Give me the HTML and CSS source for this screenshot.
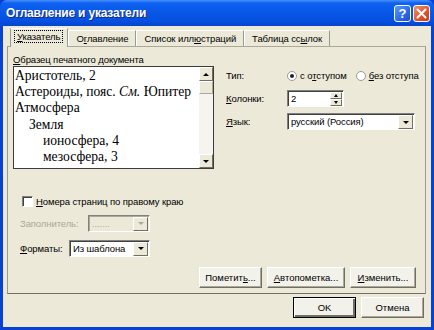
FILE: index.html
```html
<!DOCTYPE html>
<html>
<head>
    <link rel="stylesheet" href="styles.css">
</head>
<body>
    <div class="window">
        <div class="titlebar">
            <span class="title">Оглавление и указатели</span>
            <span class="cbtn help">?</span>
            <span class="cbtn close">
                <svg width="11" height="11" viewBox="0 0 11 11"><path d="M1.5 1.5 L9.5 9.5 M9.5 1.5 L1.5 9.5" stroke="#fff" stroke-width="2" stroke-linecap="round"/></svg>
            </span>
        </div>
        <div class="client">
            <div class="tabs">
                <span class="tab active"><span class="focus"><u>У</u>казатель</span></span>
                <span class="tab">О<u>г</u>лавление</span>
                <span class="tab">Список илл<u>ю</u>страций</span>
                <span class="tab">Таблица сс<u>ы</u>лок</span>
            </div>
            <div class="panel">
                <div class="top">
                    <div class="preview-col">
                        <div class="label"><u>О</u>бразец печатного документа</div>
                        <div class="preview">
                            <div class="preview-text">
                                <div>Аристотель, 2</div>
                                <div>Астероиды, пояс. <i>См.</i> Юпитер</div>
                                <div>Атмосфера</div>
                                <div class="lvl2">Земля</div>
                                <div class="lvl3">ионосфера, 4</div>
                                <div class="lvl3">мезосфера, 3</div>
                            </div>
                            <div class="vscroll">
                                <span class="sbtn"><span class="arrow up"></span></span>
                                <span class="thumb"></span>
                                <span class="track"></span>
                                <span class="sbtn"><span class="arrow down"></span></span>
                            </div>
                        </div>
                    </div>
                    <div class="options">
                        <div class="opt-row">
                            <span class="opt-label">Тип:</span>
                            <span class="radio checked"></span>
                            <span class="radio-text">с о<u>т</u>ступом</span>
                            <span class="radio"></span>
                            <span class="radio-text"><u>б</u>ез отступа</span>
                        </div>
                        <div class="opt-row">
                            <span class="opt-label"><u>К</u>олонки:</span>
                            <span class="spin">
                                <span class="spin-value">2</span>
                                <span class="spin-btns">
                                    <span class="spin-btn"><span class="arrow up small"></span></span>
                                    <span class="spin-btn"><span class="arrow down small"></span></span>
                                </span>
                            </span>
                        </div>
                        <div class="opt-row">
                            <span class="opt-label"><u>Я</u>зык:</span>
                            <span class="combo lang">
                                <span class="combo-value">русский (Россия)</span>
                                <span class="combo-btn"><span class="arrow down"></span></span>
                            </span>
                        </div>
                    </div>
                </div>
                <div class="check-row">
                    <span class="checkbox"></span>
                    <span><u>Н</u>омера страниц по правому краю</span>
                </div>
                <div class="field-row disabled">
                    <span class="field-label">Заполнитель:</span>
                    <span class="combo filler">
                        <span class="combo-value">.......</span>
                        <span class="combo-btn"><span class="arrow down"></span></span>
                    </span>
                </div>
                <div class="field-row">
                    <span class="field-label short"><u>Ф</u>орматы:</span>
                    <span class="combo formats">
                        <span class="combo-value">Из шаблона</span>
                        <span class="combo-btn"><span class="arrow down"></span></span>
                    </span>
                </div>
                <div class="panel-buttons">
                    <button class="btn mark">Пометит<u>ь</u>...</button>
                    <button class="btn auto"><u>А</u>втопометка...</button>
                    <button class="btn change"><u>И</u>зменить...</button>
                </div>
            </div>
            <div class="dialog-buttons">
                <button class="btn default">OK</button>
                <button class="btn">Отмена</button>
            </div>
        </div>
    </div>
</body>
</html>
```

FILE: styles.css
```css
* {
    box-sizing: border-box;
}

body {
    margin: 0;
    background-color: #0a3fd0;
    font-family: "Liberation Sans", Arial, sans-serif;
    font-size: 9.5px;
    letter-spacing: -0.1px;
    color: #000000;
}

.window {
    width: 434px;
    height: 330px;
    display: flex;
    flex-direction: column;
    background-color: #0842d4;
    border-radius: 7px 7px 0 0;
}

.titlebar {
    height: 26px;
    display: flex;
    align-items: center;
    gap: 2px;
    padding: 0 4px 0 6px;
    border-radius: 7px 7px 0 0;
    background: linear-gradient(#4a90ff 0, #0d62f2 3px, #0a58e8 45%, #0650e0 80%, #0445cc 100%);
}

.title {
    flex: 1;
    color: white;
    font-size: 12px;
    font-weight: bold;
    letter-spacing: -0.2px;
    text-shadow: 1px 1px #102a80;
}

.cbtn {
    width: 17px;
    height: 17px;
    border: 1px solid #ffffff;
    border-radius: 3px;
    display: flex;
    align-items: center;
    justify-content: center;
    color: white;
    font-weight: bold;
    font-size: 13px;
}

.help {
    background: linear-gradient(135deg, #5a9cff, #2a68e8 60%, #1a50d0);
}

.close {
    background: linear-gradient(135deg, #f0906a, #e0542c 60%, #c83a18);
}

.client {
    flex: 1;
    margin: 0 3px 3px 3px;
    padding: 2px 5px 0 4px;
    background-color: #ece9d8;
    display: flex;
    flex-direction: column;
}

/* tabs */
.tabs {
    height: 18px;
    display: flex;
    align-items: flex-end;
    padding-left: 3px;
}

.tab {
    height: 16px;
    padding: 2px 7px 0 7px;
    border-top: 1px solid #ffffff;
    border-right: 1px solid #919b9c;
    border-left: 1px solid #ffffff;
    background-color: #ece9d8;
    white-space: nowrap;
}

.tab.active {
    height: 19px;
    margin-bottom: -1px;
    padding: 2px 5px 0 4px;
    position: relative;
    border-left: 1px solid #919b9c;
}

.focus {
    display: inline-block;
    padding: 0 2px;
    outline: 1px dotted #000000;
}

.panel {
    height: 248px;
    border: 1px solid #919b9c;
    border-top-color: #aca899;
    border-bottom-color: #716f64;
    padding: 7px 9px 0 5px;
    display: flex;
    flex-direction: column;
}

.top {
    display: flex;
}

.label {
    height: 12px;
    line-height: 11px;
}

.preview {
    width: 201px;
    height: 103px;
    display: flex;
    border: 1px solid #3c3c3c;
    background-color: white;
}

.preview-text {
    flex: 1;
    padding: 1px 0 0 1px;
    font-family: "Liberation Serif", "Times New Roman", serif;
    font-size: 13.6px;
    letter-spacing: 0;
    line-height: 16.2px;
    white-space: nowrap;
}

.lvl2 {
    padding-left: 14px;
}

.lvl3 {
    padding-left: 28px;
}

.vscroll {
    width: 14px;
    display: flex;
    flex-direction: column;
    background-color: #f5f4ee;
}

.sbtn,
.spin-btn,
.combo-btn {
    display: flex;
    align-items: center;
    justify-content: center;
    background-color: #ece9d8;
    border: 1px solid;
    border-color: #ffffff #716f64 #716f64 #ffffff;
}

.sbtn {
    height: 14px;
}

.thumb {
    height: 13px;
    background-color: #ece9d8;
    border: 1px solid;
    border-color: #ffffff #aca899 #aca899 #ffffff;
}

.track {
    flex: 1;
}

.arrow {
    width: 0;
    height: 0;
    border-left: 3px solid transparent;
    border-right: 3px solid transparent;
}

.arrow.up {
    border-bottom: 3px solid #000000;
}

.arrow.down {
    border-top: 3px solid #000000;
}

.arrow.small {
    border-left-width: 2px;
    border-right-width: 2px;
}

/* right column */
.options {
    flex: 1;
    margin-left: 12px;
    padding-top: 13px;
    display: flex;
    flex-direction: column;
    gap: 6px;
}

.opt-row {
    height: 17px;
    display: flex;
    align-items: center;
    white-space: nowrap;
}

.opt-label {
    width: 61px;
    flex-shrink: 0;
}

.radio {
    width: 10px;
    height: 10px;
    flex-shrink: 0;
    border-radius: 50%;
    border: 1px solid #9a9a9a;
    background-color: white;
    display: flex;
    align-items: center;
    justify-content: center;
    margin-right: 3px;
}

.radio.checked::after {
    content: "";
    width: 4px;
    height: 4px;
    border-radius: 50%;
    background-color: #202020;
}

.radio-text {
    margin-right: 9px;
}

.spin {
    width: 57px;
    height: 17px;
    display: flex;
    background-color: white;
    border: 1px solid;
    border-color: #808080 #ffffff #ffffff #808080;
    box-shadow: inset 1px 1px #404040;
}

.spin-value {
    flex: 1;
    padding: 2px 0 0 3px;
}

.spin-btns {
    width: 13px;
    display: flex;
    flex-direction: column;
    padding: 1px 1px 0 0;
}

.spin-btn {
    flex: 1;
}

.combo {
    height: 17px;
    display: flex;
    align-items: stretch;
    background-color: white;
    border: 1px solid;
    border-color: #808080 #ffffff #ffffff #808080;
    box-shadow: inset 1px 1px #404040;
}

.combo-value {
    flex: 1;
    padding: 2px 0 0 3px;
    white-space: nowrap;
}

.combo-btn {
    width: 15px;
    margin: 1px 1px 0 0;
}

.lang {
    width: 128px;
}

/* lower left */
.check-row {
    margin-top: 26px;
    margin-left: 9px;
    height: 13px;
    display: flex;
    align-items: center;
    gap: 3px;
}

.checkbox {
    width: 11px;
    height: 11px;
    background-color: white;
    border: 1px solid;
    border-color: #808080 #ffffff #ffffff #808080;
    box-shadow: inset 1px 1px #404040;
}

.field-row {
    margin-top: 6px;
    margin-left: 7px;
    height: 18px;
    display: flex;
    align-items: center;
}

.field-label {
    width: 68px;
}

.field-label.short {
    width: 49px;
}

.disabled {
    color: #aca899;
}

.disabled .combo {
    background-color: #ece9d8;
    box-shadow: inset 1px 1px #aca899;
}

.disabled .arrow.down {
    border-top-color: #aca899;
}

.filler {
    width: 62px;
}

.formats {
    width: 81px;
}

.field-row + .field-row {
    margin-top: 7px;
}

/* buttons */
.btn {
    height: 21px;
    padding: 0;
    font-family: "Liberation Sans", Arial, sans-serif;
    font-size: 9.5px;
    color: #000000;
    background-color: #f2f1ea;
    border: 1px solid;
    border-color: #ffffff #716f64 #716f64 #ffffff;
    box-shadow: inset -1px -1px #aca899;
}

.panel-buttons {
    margin-top: 10px;
    display: flex;
    justify-content: flex-end;
    gap: 5px;
}

.mark {
    width: 63px;
}

.auto {
    width: 78px;
}

.change {
    width: 66px;
}

.dialog-buttons {
    margin-top: 3px;
    padding-right: 2px;
    display: flex;
    justify-content: flex-end;
    gap: 5px;
}

.dialog-buttons .btn {
    width: 63px;
}

.btn.default {
    border: 1px solid #000000;
    box-shadow: inset 1px 1px #ffffff, inset -2px -2px #716f64;
}
```
